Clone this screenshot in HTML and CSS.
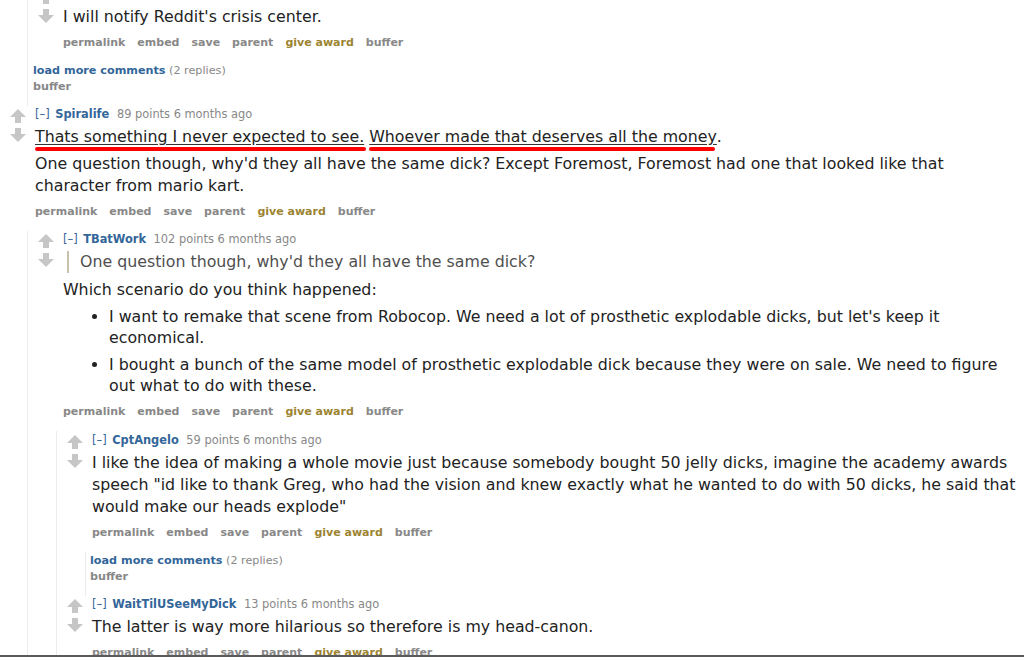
FILE: index.html
```html
<!DOCTYPE html>
<html>
<head>
<meta charset="utf-8">
<link rel="stylesheet" href="styles.css">
</head>
<body>
<div class="page">
  <div class="child first">
    <div class="comment partial">
      <div class="midcol">
        <svg class="arrow up" viewBox="0 0 16 14"><path d="M5 14H11V8H16L8 0L0 8H5Z"/></svg>
        <svg class="arrow down" viewBox="0 0 16 14"><path d="M5 0H11V6H16L8 14L0 6H5Z"/></svg>
      </div>
      <div class="entry">
        <div class="md"><p>I will notify Reddit's crisis center.</p></div>
        <ul class="flat-list">
          <li>permalink</li><li>embed</li><li>save</li><li>parent</li><li class="award">give award</li><li>buffer</li>
        </ul>
      </div>
    </div>
    <div class="morechildren">
      <span class="more">load more comments</span> <span class="gray">(2 replies)</span>
      <div class="buffer">buffer</div>
    </div>
  </div>

  <div class="comment">
    <div class="midcol">
      <svg class="arrow up" viewBox="0 0 16 14"><path d="M5 14H11V8H16L8 0L0 8H5Z"/></svg>
      <svg class="arrow down" viewBox="0 0 16 14"><path d="M5 0H11V6H16L8 14L0 6H5Z"/></svg>
    </div>
    <div class="entry">
      <p class="tagline"><span class="expand">[–]</span> <span class="author">Spiralife</span> <span class="score">89 points 6 months ago</span></p>
      <div class="md">
        <p><span class="mark">Thats something I never expected to see.</span> <span class="mark m2">Whoever made that deserves all the money</span>.</p>
        <p>One question though, why'd they all have the same dick? Except Foremost, Foremost had one that looked like that character from mario kart.</p>
      </div>
      <ul class="flat-list">
        <li>permalink</li><li>embed</li><li>save</li><li>parent</li><li class="award">give award</li><li>buffer</li>
      </ul>
    </div>
  </div>

  <div class="child lvl1">
    <div class="comment">
      <div class="midcol">
        <svg class="arrow up" viewBox="0 0 16 14"><path d="M5 14H11V8H16L8 0L0 8H5Z"/></svg>
        <svg class="arrow down" viewBox="0 0 16 14"><path d="M5 0H11V6H16L8 14L0 6H5Z"/></svg>
      </div>
      <div class="entry">
        <p class="tagline"><span class="expand">[–]</span> <span class="author">TBatWork</span> <span class="score">102 points 6 months ago</span></p>
        <div class="md">
          <blockquote><p>One question though, why'd they all have the same dick?</p></blockquote>
          <p>Which scenario do you think happened:</p>
          <ul class="bullets">
            <li>I want to remake that scene from Robocop. We need a lot of prosthetic explodable dicks, but let's keep it economical.</li>
            <li>I bought a bunch of the same model of prosthetic explodable dick because they were on sale. We need to figure out what to do with these.</li>
          </ul>
        </div>
        <ul class="flat-list">
          <li>permalink</li><li>embed</li><li>save</li><li>parent</li><li class="award">give award</li><li>buffer</li>
        </ul>
      </div>
    </div>

    <div class="child lvl2">
      <div class="comment">
        <div class="midcol">
          <svg class="arrow up" viewBox="0 0 16 14"><path d="M5 14H11V8H16L8 0L0 8H5Z"/></svg>
          <svg class="arrow down" viewBox="0 0 16 14"><path d="M5 0H11V6H16L8 14L0 6H5Z"/></svg>
        </div>
        <div class="entry">
          <p class="tagline"><span class="expand">[–]</span> <span class="author">CptAngelo</span> <span class="score">59 points 6 months ago</span></p>
          <div class="md">
            <p>I like the idea of making a whole movie just because somebody bought 50 jelly dicks, imagine the academy awards speech "id like to thank Greg, who had the vision and knew exactly what he wanted to do with 50 dicks, he said that would make our heads explode"</p>
          </div>
          <ul class="flat-list">
            <li>permalink</li><li>embed</li><li>save</li><li>parent</li><li class="award">give award</li><li>buffer</li>
          </ul>
        </div>
      </div>
      <div class="child lvl3">
        <div class="morechildren">
          <span class="more">load more comments</span> <span class="gray">(2 replies)</span>
          <div class="buffer">buffer</div>
        </div>
      </div>

      <div class="comment">
        <div class="midcol">
          <svg class="arrow up" viewBox="0 0 16 14"><path d="M5 14H11V8H16L8 0L0 8H5Z"/></svg>
          <svg class="arrow down" viewBox="0 0 16 14"><path d="M5 0H11V6H16L8 14L0 6H5Z"/></svg>
        </div>
        <div class="entry">
          <p class="tagline"><span class="expand">[–]</span> <span class="author">WaitTilUSeeMyDick</span> <span class="score">13 points 6 months ago</span></p>
          <div class="md">
            <p>The latter is way more hilarious so therefore is my head-canon.</p>
          </div>
          <ul class="flat-list">
            <li>permalink</li><li>embed</li><li>save</li><li>parent</li><li class="award">give award</li><li>buffer</li>
          </ul>
        </div>
      </div>
    </div>
  </div>
</div>
</body>
</html>
```

FILE: styles.css
```css
html, body {
  margin: 0;
  padding: 0;
  background: #fff;
}
body {
  font-family: "DejaVu Sans", Verdana, sans-serif;
  color: #222;
}
.page {
  height: 655px;
  overflow: hidden;
  border-bottom: 2px solid #5a5a5a;
}
p { margin: 0; }

.child {
  border-left: 1px solid #ececec;
}
.child.first { margin-left: 27px; }
.child.lvl1 { margin-left: 27px; }
.child.lvl2 { margin-left: 28px; padding-top: 1px; }
.child.lvl3 { margin-left: 28px; }

.comment {
  display: flex;
  align-items: flex-start;
}
.midcol {
  width: 16px;
  margin-left: 10px;
  flex: none;
  display: flex;
  flex-direction: column;
  padding-top: 3px;
  gap: 5px;
}
.arrow {
  width: 16px;
  height: 14px;
  fill: #c6c6c6;
}
.partial .midcol { padding-top: 0; margin-top: -10px; }

.entry {
  margin-left: 9px;
  flex: 1;
  min-width: 0;
}
.tagline {
  font-size: 11.4px;
  line-height: 15px;
  color: #888;
  padding-top: 1px;
}
.expand { color: #369; }
.author { color: #369; font-weight: bold; margin: 0 4px 0 2px; }

.md {
  font-size: 15.8px;
  line-height: 22px;
  margin-top: 4px;
}
.md p { margin-bottom: 5px; }
.md > p:last-child { margin-bottom: 0; }
.partial .md { margin-top: 6px; }

.mark {
  position: relative;
  text-decoration: underline;
  text-decoration-color: #333;
  text-underline-offset: 2px;
}
.mark::after {
  content: "";
  position: absolute;
  left: 0;
  right: -2px;
  bottom: -5px;
  height: 4px;
  border-radius: 2px;
  background: #f00;
}
.mark.m2::after { right: 2px; }

blockquote {
  margin: 0 0 6px 4px;
  padding: 0 8px 0 11px;
  border-left: 2px solid #c5c1ad;
  color: #4f4f4f;
}
blockquote p { margin: 0 !important; }
.bullets {
  margin: 5px 0 0 0;
  padding: 0 0 1px 46px;
}
.bullets li { margin-bottom: 6px; line-height: 21px; }
.bullets li:last-child { margin-bottom: 0; }

.flat-list {
  list-style: none;
  margin: 7px 0 0;
  padding: 0 0 12px;
  display: flex;
  gap: 12px;
  font-size: 11px;
  line-height: 15px;
  font-weight: bold;
  color: #888;
}
.flat-list .award { color: #9c8431; }

.morechildren {
  font-size: 11.2px;
  line-height: 15.5px;
  padding: 1px 0 12px 5px;
  color: #888;
}
.lvl3 .morechildren { padding-left: 4px; }
.more { color: #369; font-weight: bold; }
.buffer { font-weight: bold; color: #888; }
```
